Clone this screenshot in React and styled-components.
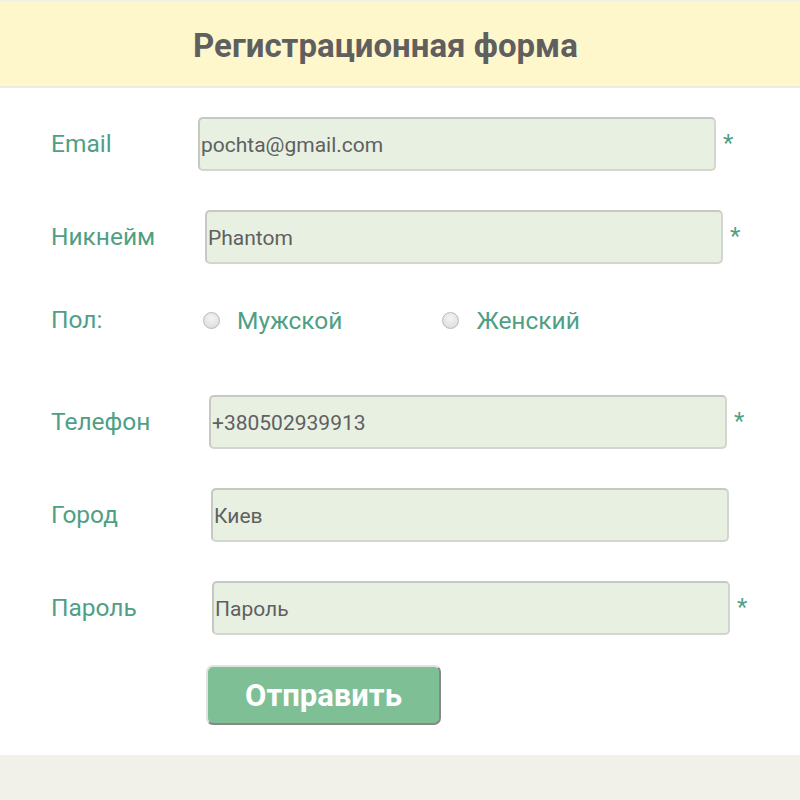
import styled, { createGlobalStyle } from "styled-components";

const GlobalStyle = createGlobalStyle`
  html, body {
    margin: 0;
    padding: 0;
    background: #f1f1ea;
    font-family: Roboto, "Liberation Sans", sans-serif;
  }
`;

const fields = [
  { label: "Email", value: "pochta@gmail.com", shift: 0, required: true },
  { label: "Никнейм", value: "Phantom", shift: 7, required: true },
];

const fields2 = [
  { label: "Телефон", value: "+380502939913", shift: 11, required: true, gap: 48 },
  { label: "Город", value: "Киев", shift: 13, required: false, gap: 39 },
  { label: "Пароль", value: "Пароль", shift: 14, required: true, gap: 39 },
];

function App() {
  return (
    <>
      <GlobalStyle />
      <Page>
        <Header>
          <Title>Регистрационная форма</Title>
        </Header>
        <Form onSubmit={e => e.preventDefault()}>
          {fields.map((f, i) => (
            <Row key={f.label} gap={i === 0 ? 29 : 39}>
              <Label>{f.label}</Label>
              <Input shift={f.shift} defaultValue={f.value} />
              {f.required && <Star>*</Star>}
            </Row>
          ))}
          <Row gap={29}>
            <Label>Пол:</Label>
            <RadioGroup>
              <RadioOption>
                <Radio />
                <span>Мужской</span>
              </RadioOption>
              <RadioOption>
                <Radio />
                <span>Женский</span>
              </RadioOption>
            </RadioGroup>
          </Row>
          {fields2.map(f => (
            <Row key={f.label} gap={f.gap}>
              <Label>{f.label}</Label>
              <Input shift={f.shift} defaultValue={f.value} />
              {f.required && <Star>*</Star>}
            </Row>
          ))}
          <Submit type="submit">Отправить</Submit>
        </Form>
      </Page>
    </>
  );
}

export default App;

const Page = styled.div`
  width: 800px;
  border-top: 2px solid #f0f0ea;
  background: #fff;
`;

const Header = styled.header`
  height: 86px;
  background: #fff7cc;
  border-bottom: 2px solid #ecebe3;
  display: flex;
  align-items: center;
  padding-left: 193px;
  box-sizing: border-box;
`;

const Title = styled.h1`
  margin: 0;
  font-size: 33px;
  font-weight: 700;
  color: #5f5f5f;
  padding-top: 2px;
`;

const Form = styled.form`
  display: flex;
  flex-direction: column;
  padding: 0 0 30px 51px;
`;

const Row = styled.div`
  display: flex;
  align-items: center;
  height: 54px;
  margin-top: ${p => p.gap}px;
`;

const Label = styled.label`
  width: 147px;
  flex-shrink: 0;
  font-size: 24.5px;
  color: #4f9f86;
  padding-bottom: 2px;
`;

const Input = styled.input`
  width: 518px;
  height: 54px;
  box-sizing: border-box;
  margin-left: ${p => p.shift}px;
  padding: 2px 0 0 1px;
  background: #e8f0e2;
  border: 2px solid #d2d6ce;
  border-top-color: #c6c9c2;
  border-left-color: #c6c9c2;
  border-radius: 5px;
  font-family: Roboto, "Liberation Sans", sans-serif;
  font-size: 21px;
  color: #606060;
  outline: none;
`;

const Star = styled.span`
  margin-left: 7px;
  font-size: 24px;
  color: #4f9f86;
  padding-bottom: 2px;
`;

const RadioGroup = styled.div`
  display: flex;
  align-items: center;
  gap: 100px;
  padding-left: 5px;
`;

const RadioOption = styled.label`
  display: flex;
  align-items: center;
  gap: 17px;
  font-size: 24.5px;
  color: #4f9f86;
`;

const Radio = styled.span`
  width: 15px;
  height: 15px;
  border-radius: 50%;
  border: 1px solid #b9b9b9;
  background: radial-gradient(circle at 50% 35%, #f4f4f4, #d8d8d8);
`;

const Submit = styled.button`
  align-self: flex-start;
  margin: 30px 0 0 155px;
  width: 235px;
  height: 60px;
  background: #7fbf95;
  border: 2px solid #888;
  border-top-color: #e2e2e2;
  border-left-color: #e2e2e2;
  border-radius: 7px;
  font-family: Roboto, "Liberation Sans", sans-serif;
  font-size: 31px;
  font-weight: 700;
  color: #fff;
  cursor: pointer;
`;
